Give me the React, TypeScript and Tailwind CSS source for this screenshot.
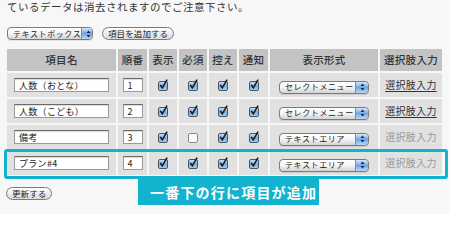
import React from "react";

const Stepper = () => (
  <span className="flex h-full w-[13px] shrink-0 items-center justify-center rounded-r-[4px] border-l border-[#7d8fb0] bg-linear-to-b from-[#d6e6fa] via-[#6fa6e8] to-[#bcd8f7]">
    <svg width="5" height="8" viewBox="0 0 5 8">
      <path d="M2.5 0.5 L4.5 3 L0.5 3 Z" fill="#1d2a44" />
      <path d="M2.5 7.5 L4.5 5 L0.5 5 Z" fill="#1d2a44" />
    </svg>
  </span>
);

const AquaSelect = ({ label, w }: { label: string; w: string }) => (
  <div
    className={`${w} inline-flex h-[13px] items-center justify-between overflow-hidden rounded-[4px] border border-[#7b7b7b] bg-linear-to-b from-white via-[#f4f4f4] to-[#d2d2d2] align-middle shadow-[0_1px_0_rgba(0,0,0,0.08)]`}
  >
    <span className="whitespace-nowrap pl-[5px] text-[8px] leading-none tracking-[0.6px] text-[#222]">{label}</span>
    <Stepper />
  </div>
);

const PillButton = ({ label }: { label: string }) => (
  <div className="inline-flex h-[13px] items-center whitespace-nowrap rounded-full border border-[#7b7b7b] bg-linear-to-b from-white to-[#dadada] px-[5px] text-[8.5px] leading-none tracking-[0.1px] text-[#222]">
    {label}
  </div>
);

const Check = ({ on }: { on: boolean }) =>
  on ? (
    <svg width="12" height="12" viewBox="0 0 12 12" className="mx-auto block">
      <defs>
        <linearGradient id="cb" x1="0" y1="0" x2="0" y2="1">
          <stop offset="0" stopColor="#d4e6f8" />
          <stop offset="0.5" stopColor="#76aee6" />
          <stop offset="1" stopColor="#a9d0f4" />
        </linearGradient>
      </defs>
      <rect x="1.5" y="2.5" width="9" height="9" rx="1.5" fill="url(#cb)" stroke="#4a5566" strokeWidth="1" />
      <path d="M3.6 6.4 L5.3 8.8 L9.8 1.2" fill="none" stroke="#1a1a1a" strokeWidth="1.6" strokeLinecap="round" />
    </svg>
  ) : (
    <svg width="12" height="12" viewBox="0 0 12 12" className="mx-auto block">
      <rect x="1.5" y="2.5" width="9" height="9" rx="1.5" fill="#fafafa" stroke="#8a8a8a" strokeWidth="1" />
    </svg>
  );

const TextInput = ({ value, w }: { value: string; w: string }) => (
  <div
    className={`${w} mx-auto flex h-[14px] items-center whitespace-nowrap border border-[#9a9a9a] border-t-[#6a6a6a] bg-white pl-[4px] text-[9px] leading-none tracking-[0.3px] text-[#222] shadow-[inset_0_1px_1px_rgba(0,0,0,0.15)]`}
  >
    {value}
  </div>
);

type Row = {
  name: string;
  order: string;
  checks: boolean[];
  format: string;
  linked: boolean;
};

const rows: Row[] = [
  { name: "人数（おとな）", order: "1", checks: [true, true, true, true], format: "セレクトメニュー", linked: true },
  { name: "人数（こども）", order: "2", checks: [true, true, true, true], format: "セレクトメニュー", linked: true },
  { name: "備考", order: "3", checks: [true, false, true, true], format: "テキストエリア", linked: false },
  { name: "プラン#4", order: "4", checks: [true, true, true, true], format: "テキストエリア", linked: false },
];

const headers = [
  { label: "項目名", w: "w-[109px]" },
  { label: "順番", w: "w-[29px]" },
  { label: "表示", w: "w-[28px]" },
  { label: "必須", w: "w-[28px]" },
  { label: "控え", w: "w-[28px]" },
  { label: "通知", w: "w-[29px]" },
  { label: "表示形式", w: "w-[108px]" },
  { label: "選択肢入力", w: "w-[62px]" },
];

export default function App() {
  return (
    <div className="relative h-[214px] w-[450px] overflow-hidden bg-[#f7f7f7] font-['Noto_Sans_CJK_JP','Liberation_Sans',sans-serif] text-[#222]">
      <p className="whitespace-nowrap pl-[7px] pt-[1px] text-[10.5px] leading-[12px] tracking-[0.5px] text-[#333]">
        ているデータは消去されますのでご注意下さい。
      </p>

      <div className="mt-[14px] flex h-[13px] items-center gap-[9px] pl-[7px]">
        <AquaSelect label="テキストボックス" w="w-[86px]" />
        <PillButton label="項目を追加する" />
      </div>

      <div className="relative mt-[7px]">
        <table className="ml-[5px] w-[439px] table-fixed border-separate border-spacing-[2px]">
          <thead>
            <tr className="h-[22px]">
              {headers.map((h) => (
                <th
                  key={h.label}
                  className={`${h.w} whitespace-nowrap bg-[#c3c3c3] p-0 text-center text-[10.5px] font-medium leading-none tracking-[0.3px] text-[#333]`}
                >
                  {h.label}
                </th>
              ))}
            </tr>
          </thead>
          <tbody>
            {rows.map((r) => (
              <tr key={r.order} className="h-[24px]">
                <td className="bg-[#e1e1e1] p-0">
                  <TextInput value={r.name} w="w-[95px]" />
                </td>
                <td className="bg-[#e1e1e1] p-0">
                  <TextInput value={r.order} w="w-[20px]" />
                </td>
                {r.checks.map((c, i) => (
                  <td key={i} className="bg-[#e1e1e1] p-0">
                    <Check on={c} />
                  </td>
                ))}
                <td className="bg-[#e1e1e1] p-0 text-center leading-none">
                  <AquaSelect label={r.format} w="w-[90px]" />
                </td>
                <td
                  className={`whitespace-nowrap bg-[#e1e1e1] p-0 text-center text-[10px] leading-none tracking-[0.3px] ${
                    r.linked ? "text-[#333] underline underline-offset-2" : "text-[#9a9a9a]"
                  }`}
                >
                  選択肢入力
                </td>
              </tr>
            ))}
          </tbody>
        </table>

        <div className="pointer-events-none absolute left-[4px] top-[102px] h-[30px] w-[444px] rounded-[3px] border-[3px] border-[#12b3ce]" />
        <div className="absolute left-[138px] top-[131px] flex h-[27px] w-[181px] items-center whitespace-nowrap bg-[#12b3ce] pl-[12px] text-[14px] font-bold leading-none tracking-[1.2px] text-white">
          一番下の行に項目が追加
        </div>
      </div>

      <div className="mt-[10px] flex pl-[6px]">
        <PillButton label="更新する" />
      </div>
    </div>
  );
}
